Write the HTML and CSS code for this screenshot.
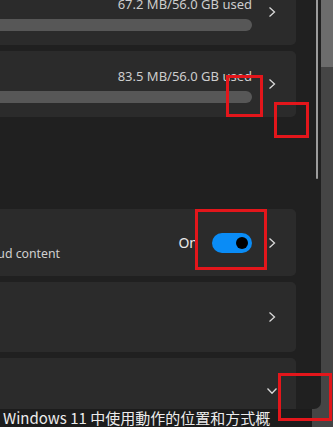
FILE: index.html
```html
<!DOCTYPE html>
<html lang="en">
<head>
<meta charset="utf-8">
<title>Storage</title>
<link rel="stylesheet" href="styles.css">
</head>
<body>
<div class="screen">
  <div class="window">
    <div class="content">
      <div class="card card-a">
        <div class="usage">
          <span class="used">67.2 MB/56.0 GB used</span>
          <div class="bar"></div>
        </div>
        <svg class="chev" viewBox="0 0 10 10" width="10" height="10"><polyline points="2.5,0.5 7.5,5 2.5,9.5"/></svg>
      </div>
      <div class="card card-b">
        <div class="usage">
          <span class="used">83.5 MB/56.0 GB used</span>
          <div class="bar"></div>
        </div>
        <svg class="chev" viewBox="0 0 10 10" width="10" height="10"><polyline points="2.5,0.5 7.5,5 2.5,9.5"/></svg>
      </div>
      <div class="card card-c">
        <div class="info-wrap">
          <div class="info">
            <div class="title">Storage Sense</div>
            <div class="desc">Automatically free up space and manage cloud content</div>
          </div>
        </div>
        <span class="state">On</span>
        <span class="switch"><span class="knob"></span></span>
        <svg class="chev" viewBox="0 0 10 10" width="10" height="10"><polyline points="2.5,0.5 7.5,5 2.5,9.5"/></svg>
      </div>
      <div class="card card-d">
        <svg class="chev" viewBox="0 0 10 10" width="10" height="10"><polyline points="2.5,0.5 7.5,5 2.5,9.5"/></svg>
      </div>
      <div class="card card-e">
        <svg class="chev-down" viewBox="0 0 10 6" width="10" height="6"><polyline points="0.5,0.5 5,5.3 9.5,0.5"/></svg>
      </div>
    </div>
    <div class="scroll"><div class="thumb"></div></div>
  </div>
  <div class="side"><div class="side-top"></div></div>
</div>
<div class="caption">Windows 11 中使用動作的位置和方式概</div>
<div class="mark mark-1"></div>
<div class="mark mark-2"></div>
<div class="mark mark-3"></div>
<div class="mark mark-4"></div>
</body>
</html>
```
FILE: styles.css
```css
html, body {
  margin: 0;
  padding: 0;
}
body {
  width: 333px;
  height: 427px;
  overflow: hidden;
  background: #454545;
  font-family: "Noto Sans", "Noto Sans CJK TC", sans-serif;
  position: relative;
}
.screen {
  display: flex;
  height: 409px;
}
.window {
  width: 321px;
  height: 409px;
  background: #202020;
  border-bottom-right-radius: 7px;
  overflow: hidden;
  display: flex;
  flex-shrink: 0;
}
.content {
  width: 306px;
  margin-left: -10px;
  margin-top: -21px;
  display: flex;
  flex-direction: column;
  gap: 6px;
  flex-shrink: 0;
}
.card {
  background: #2b2b2b;
  border-radius: 5px;
  display: flex;
  align-items: center;
  padding-right: 19px;
  flex-shrink: 0;
}
.card-a, .card-b { height: 66px; }
.card-c { height: 67px; margin-top: 86px; }
.card-d { height: 70px; justify-content: flex-end; }
.card-e { height: 66px; justify-content: flex-end; }
.usage {
  flex: 1;
  display: flex;
  flex-direction: column;
  align-items: flex-end;
  margin-right: 15px;
}
.used {
  font-size: 13px;
  line-height: 20px;
  color: #cdcdcd;
  white-space: nowrap;
}
.bar {
  margin-top: 5px;
  width: 100%;
  height: 12px;
  border-radius: 6px;
  background: #575757;
}
.chev, .chev-down {
  flex-shrink: 0;
  fill: none;
  stroke: #d8d8d8;
  stroke-width: 1.3;
}
.info-wrap {
  width: 70px;
  flex-shrink: 0;
  display: flex;
  justify-content: flex-end;
}
.info {
  white-space: nowrap;
  padding-top: 3px;
}
.title {
  font-size: 14px;
  line-height: 20px;
  color: #ffffff;
}
.desc {
  font-size: 12.3px;
  line-height: 18px;
  color: #d0d0d0;
}
.state {
  margin-left: auto;
  font-size: 14px;
  line-height: 20px;
  color: #e8e8e8;
  margin-right: 14px;
}
.switch {
  width: 40px;
  height: 20px;
  border-radius: 10px;
  background: #0a8cf6;
  display: flex;
  align-items: center;
  justify-content: flex-end;
  padding-right: 4px;
  box-sizing: border-box;
  margin-right: 15px;
}
.knob {
  width: 12px;
  height: 12px;
  border-radius: 50%;
  background: #000;
}
.scroll {
  width: 25px;
  padding-left: 20px;
  box-sizing: border-box;
  flex-shrink: 0;
}
.thumb {
  width: 2px;
  height: 179px;
  background: #9c9c9c;
  border-radius: 0 0 1px 1px;
}
.side {
  flex: 1;
}
.side-top {
  height: 67px;
  background: #6c6c6c;
}
.caption {
  width: 312px;
  height: 18px;
  background: #1c1c1c;
  color: #ececec;
  font-family: "Noto Sans CJK TC", sans-serif;
  font-size: 15px;
  line-height: 18px;
  padding-left: 3px;
  box-sizing: border-box;
  white-space: nowrap;
  overflow: hidden;
}
.mark {
  position: absolute;
  border: 3px solid #e3161b;
  box-sizing: border-box;
}
.mark-1 { left: 226px; top: 75px; width: 37px; height: 42px; }
.mark-2 { left: 274px; top: 102px; width: 35px; height: 36px; }
.mark-3 { left: 195px; top: 209px; width: 72px; height: 61px; }
.mark-4 { left: 278px; top: 373px; width: 54px; height: 48px; }
```
